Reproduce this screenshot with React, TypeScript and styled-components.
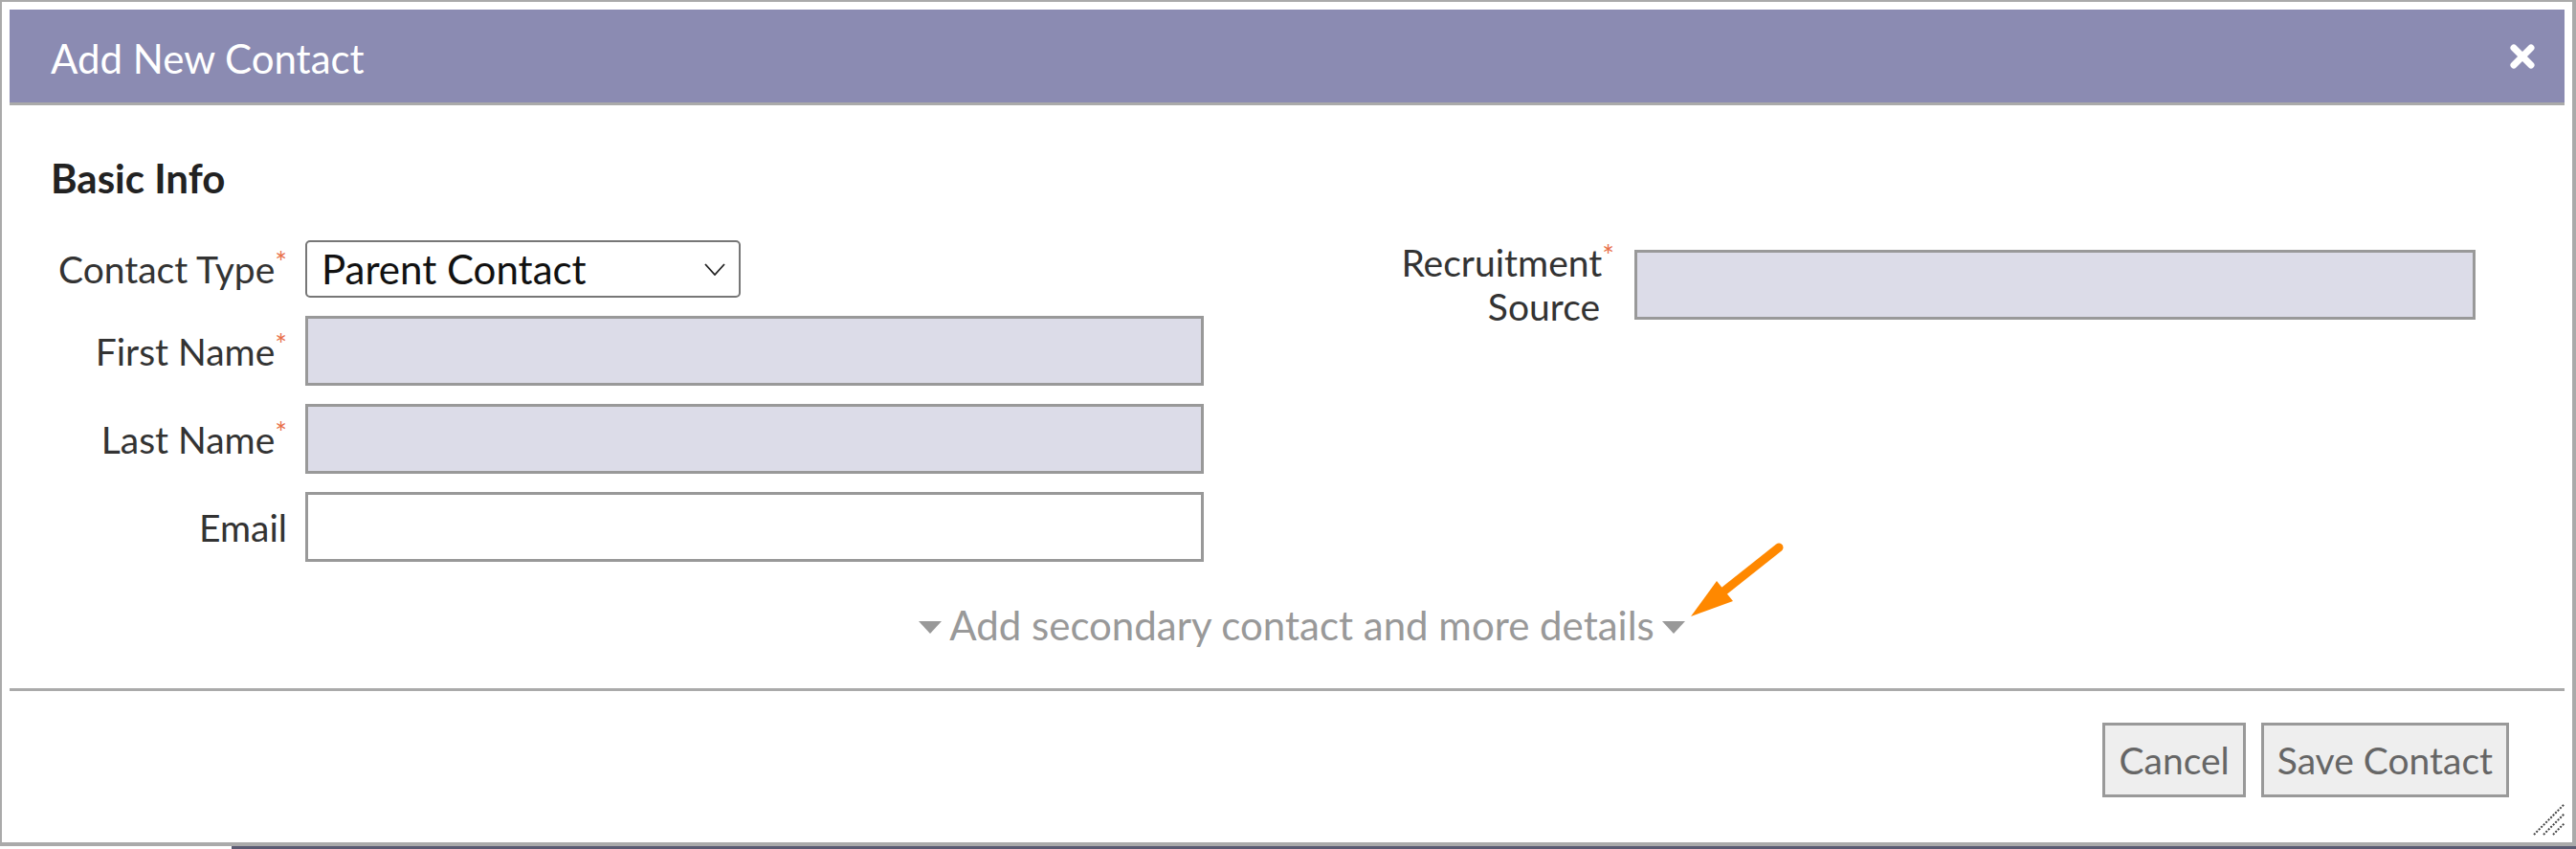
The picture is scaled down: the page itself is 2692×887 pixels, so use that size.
import React from 'react';
import styled, { createGlobalStyle } from 'styled-components';

const GlobalStyle = createGlobalStyle`
  html, body {
    margin: 0;
    padding: 0;
    background: #ffffff;
  }
  body {
    font-family: Lato, 'Open Sans', sans-serif;
    color: #333333;
  }
`;

export default function App() {
  return (
    <>
      <GlobalStyle />
      <Dialog>
        <Header>
          <Title>Add New Contact</Title>
          <CloseButton aria-label="Close">
            <svg width="28" height="28" viewBox="0 0 28 28">
              <path d="M5 5 L23 23 M23 5 L5 23" stroke="#fff" strokeWidth="7" strokeLinecap="round" />
            </svg>
          </CloseButton>
        </Header>

        <Body>
          <SectionTitle>Basic Info</SectionTitle>
          <FormColumns>
            <FieldGrid $labelWidth={247} $inputWidth={939} $gap={19}>
              <Label>
                Contact Type<Required>*</Required>
              </Label>
              <SelectBox>
                <span>Parent Contact</span>
                <svg width="22" height="13" viewBox="0 0 22 13">
                  <path d="M1 1 L11 12 L21 1" fill="none" stroke="#222" strokeWidth="1.8" />
                </svg>
              </SelectBox>

              <Label>
                First Name<Required>*</Required>
              </Label>
              <TextInput $required />

              <Label>
                Last Name<Required>*</Required>
              </Label>
              <TextInput $required />

              <Label>Email</Label>
              <TextInput />
            </FieldGrid>

            <FieldGrid $labelWidth={287} $inputWidth={879} $gap={21}>
              <Label $hangingStar>
                Recruitment<Required>*</Required>
                <br />
                Source
              </Label>
              <TextInput $required />
            </FieldGrid>
          </FormColumns>

          <MoreToggle>
            <Caret />
            Add secondary contact and more details
            <Caret />
            <Pointer width="115" height="95" viewBox="0 0 115 95">
              <path d="M102 15 L44 61" stroke="#ff8800" strokeWidth="9" strokeLinecap="round" />
              <polygon points="10,87 37,50 54,71" fill="#ff8800" />
            </Pointer>
          </MoreToggle>
        </Body>

        <Divider />

        <Footer>
          <Button>Cancel</Button>
          <Button>Save Contact</Button>
        </Footer>

        <ResizeGrip width="36" height="36" viewBox="0 0 36 36">
          <path
            d="M2 34 L34 2 M12 34 L34 12 M22 34 L34 22"
            stroke="#444"
            strokeWidth="2"
            strokeDasharray="2 1.5"
          />
        </ResizeGrip>
      </Dialog>
      <PageStrip />
    </>
  );
}

const Dialog = styled.div`
  position: relative;
  box-sizing: border-box;
  width: 2692px;
  height: 884px;
  padding: 8px;
  background: #ffffff;
  border-style: solid;
  border-color: #aaaaaa;
  border-width: 2px 4px 4px 2px;
`;

const Header = styled.div`
  display: flex;
  align-items: center;
  justify-content: space-between;
  height: 97px;
  padding: 0 30px 0 43px;
  background: #8b8bb2;
  border-bottom: 3px solid #aaaaaa;
`;

const Title = styled.span`
  color: #ffffff;
  font-size: 42px;
  line-height: 1;
  margin-top: 4px;
`;

const CloseButton = styled.span`
  display: flex;
  width: 28px;
  height: 28px;
`;

const Body = styled.div`
  padding: 0 0 0 43px;
`;

const SectionTitle = styled.h3`
  margin: 52px 0 0 0;
  font-size: 42px;
  line-height: 48px;
  font-weight: 700;
  color: #222222;
`;

const FormColumns = styled.div`
  display: flex;
  align-items: flex-start;
  gap: 142px;
  margin-top: 41px;
`;

const FieldGrid = styled.div<{ $labelWidth: number; $inputWidth: number; $gap: number }>`
  display: grid;
  grid-template-columns: ${(p) => p.$labelWidth}px ${(p) => p.$inputWidth}px;
  column-gap: ${(p) => p.$gap}px;
  row-gap: 19px;
  align-items: center;
`;

const Label = styled.label<{ $hangingStar?: boolean }>`
  text-align: right;
  font-size: 39px;
  line-height: 46px;
  color: #333333;
  padding-right: ${(p) => (p.$hangingStar ? '15px' : '0')};

  & > span {
    margin-right: ${(p) => (p.$hangingStar ? '-15px' : '0')};
  }
`;

const Required = styled.span`
  color: #e8704a;
  font-size: 30px;
  line-height: 0;
  vertical-align: 11px;
`;

const SelectBox = styled.div`
  box-sizing: border-box;
  display: flex;
  align-items: center;
  justify-content: space-between;
  width: 455px;
  height: 60px;
  padding: 0 14px 0 15px;
  border: 2px solid #777777;
  border-radius: 5px;
  background: #ffffff;
  font-size: 42px;
  color: #111111;
`;

const TextInput = styled.div<{ $required?: boolean }>`
  box-sizing: border-box;
  height: 73px;
  border: 3px solid #999999;
  background: ${(p) => (p.$required ? '#dcdce8' : '#ffffff')};
`;

const MoreToggle = styled.div`
  position: relative;
  display: flex;
  align-items: center;
  justify-content: center;
  gap: 8px;
  width: max-content;
  margin: 41px auto 0 auto;
  padding-right: 12px;
  font-size: 42px;
  line-height: 50px;
  color: #999999;
  cursor: pointer;
`;

const Caret = styled.span`
  width: 0;
  height: 0;
  margin-top: 4px;
  border-left: 12px solid transparent;
  border-right: 12px solid transparent;
  border-top: 13px solid #999999;
`;

const Pointer = styled.svg`
  position: absolute;
  right: -99px;
  top: -71px;
`;

const Divider = styled.div`
  height: 3px;
  margin-top: 41px;
  background: #aaaaaa;
`;

const Footer = styled.div`
  display: flex;
  justify-content: flex-end;
  gap: 16px;
  margin-top: 33px;
  padding-right: 58px;
`;

const Button = styled.button`
  box-sizing: border-box;
  height: 78px;
  padding: 0 14px;
  border: 3px solid #999999;
  border-radius: 0;
  background: #eeeeee;
  font-family: Lato, 'Open Sans', sans-serif;
  font-size: 39px;
  color: #666666;
  cursor: pointer;
`;

const ResizeGrip = styled.svg`
  position: absolute;
  right: 6px;
  bottom: 6px;
`;

const PageStrip = styled.div`
  height: 3px;
  margin-left: 242px;
  background: #5b5b72;
`;
